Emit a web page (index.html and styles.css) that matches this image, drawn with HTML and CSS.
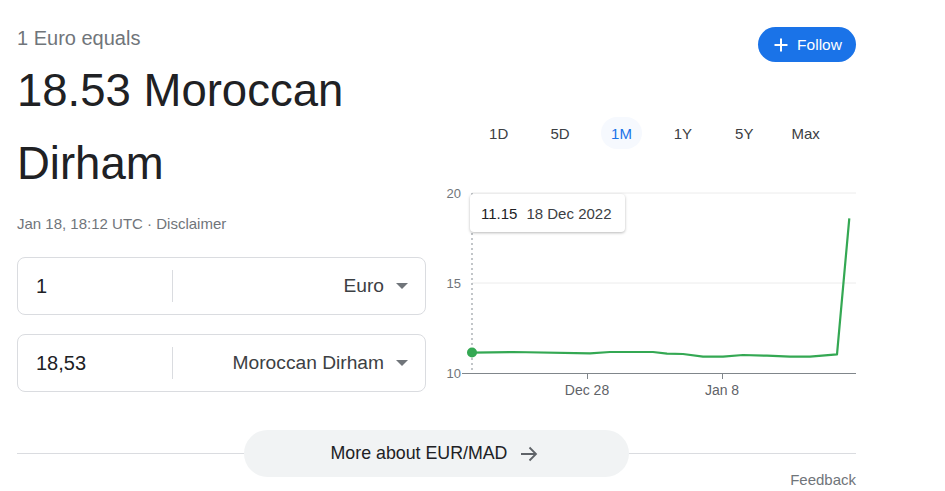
FILE: index.html
```html
<!DOCTYPE html>
<html lang="en">
<head>
<meta charset="utf-8">
<title>EUR to MAD</title>
<link rel="stylesheet" href="styles.css">
</head>
<body>
<div class="page">
  <div class="top">
    <div class="left">
      <div class="equals">1 Euro equals</div>
      <div class="rate">18.53 Moroccan Dirham</div>
      <div class="meta">Jan 18, 18:12 UTC · Disclaimer</div>
      <div class="boxes">
        <div class="box">
          <div class="amount">1</div>
          <div class="divider"></div>
          <div class="currency"><span>Euro</span><span class="caret"></span></div>
        </div>
        <div class="box">
          <div class="amount">18,53</div>
          <div class="divider"></div>
          <div class="currency"><span>Moroccan Dirham</span><span class="caret"></span></div>
        </div>
      </div>
    </div>
    <div class="right">
      <div class="follow-row">
        <button class="follow">
          <svg width="14" height="14" viewBox="0 0 14 14"><path d="M7 0.5V13.5M0.5 7H13.5" stroke="#fff" stroke-width="2" fill="none"/></svg>
          <span>Follow</span>
        </button>
      </div>
      <div class="tabs">
        <div class="tab">1D</div>
        <div class="tab">5D</div>
        <div class="tab active">1M</div>
        <div class="tab">1Y</div>
        <div class="tab">5Y</div>
        <div class="tab">Max</div>
      </div>
      <div class="chart">
        <svg width="416" height="220" viewBox="0 0 416 220">
          <line x1="32" y1="8" x2="416" y2="8" stroke="#ececec" stroke-width="1"/>
          <line x1="32" y1="98" x2="416" y2="98" stroke="#ececec" stroke-width="1"/>
          <line x1="22" y1="188.5" x2="416" y2="188.5" stroke="#80868b" stroke-width="1"/>
          <line x1="147.5" y1="188" x2="147.5" y2="194" stroke="#80868b" stroke-width="1"/>
          <line x1="282.5" y1="188" x2="282.5" y2="194" stroke="#80868b" stroke-width="1"/>
          <line x1="32" y1="8" x2="32" y2="188" stroke="#9aa0a6" stroke-width="1.2" stroke-dasharray="2 3"/>
          <text x="21" y="12.5" class="ylab" text-anchor="end">20</text>
          <text x="21" y="102.5" class="ylab" text-anchor="end">15</text>
          <text x="21" y="192.5" class="ylab" text-anchor="end">10</text>
          <text x="147" y="210" class="xlab" text-anchor="middle">Dec 28</text>
          <text x="282" y="210" class="xlab" text-anchor="middle">Jan 8</text>
          <polyline fill="none" stroke="#34a853" stroke-width="2.2" stroke-linejoin="round" points="32,167.7 73,167 150,168.3 170,167 213,167 227,168.7 243,169 263,171.7 283,171.7 303,170 327,170.7 350,171.7 370,171.7 397,169.3 409.3,33.3"/>
          <circle cx="32" cy="167.5" r="5" fill="#34a853"/>
        </svg>
        <div class="tooltip"><span class="tval">11.15</span><span class="tdate">18 Dec 2022</span></div>
      </div>
    </div>
  </div>
  <div class="more">
    <button class="more-btn">
      <span>More about EUR/MAD</span>
      <svg width="18" height="16" viewBox="0 0 18 16"><path d="M1 8H16M9.5 1.5L16 8L9.5 14.5" stroke="#5f6368" stroke-width="1.8" fill="none"/></svg>
    </button>
  </div>
  <div class="feedback">Feedback</div>
</div>
</body>
</html>
```

FILE: styles.css
```css
* { box-sizing: border-box; }
html, body { margin: 0; padding: 0; background: #fff; }
body { font-family: "Liberation Sans", Arial, sans-serif; color: #202124; }

.page { width: 839px; margin-left: 17px; }

.top { display: flex; justify-content: space-between; }
.left { width: 409px; padding-top: 26px; }
.right { width: 416px; }

.equals { font-size: 20px; line-height: 24px; color: #70757a; }
.rate { margin-top: 4px; font-size: 45.5px; line-height: 73px; color: #202124; width: 380px; }
.meta { margin-top: 14px; font-size: 15px; line-height: 20px; color: #70757a; }

.boxes { margin-top: 23px; display: flex; flex-direction: column; gap: 19px; }
.box {
  height: 58px; border: 1px solid #dadce0; border-radius: 8px;
  display: flex; align-items: center;
}
.amount { width: 154px; padding-left: 18px; font-size: 20px; color: #202124; }
.divider { width: 1px; height: 32px; background: #dadce0; }
.currency {
  flex: 1; display: flex; justify-content: flex-end; align-items: center;
  gap: 12px; padding-right: 17px; font-size: 19.2px; color: #3c4043;
}
.caret {
  width: 0; height: 0; border-left: 6px solid transparent; border-right: 6px solid transparent;
  border-top: 6px solid #70757a;
}

.follow-row { display: flex; justify-content: flex-end; margin-top: 27px; }
.follow {
  height: 35px; width: 98px; border: none; border-radius: 18px; background: #1a73e8;
  color: #fff; font-family: "Liberation Sans", Arial, sans-serif; font-size: 15.5px;
  display: flex; align-items: center; justify-content: center; gap: 9px; padding: 0 0 0 2px;
}

.tabs { margin-top: 55px; margin-left: 28px; display: grid; grid-template-columns: repeat(6, 61.4px); height: 32px; }
.tab { display: flex; align-items: center; justify-content: center; font-size: 15px; color: #3c4043; }
.tab.active { color: #1a73e8; background: #f6f9fe; border-radius: 16px; margin: 0 10px; }

.chart { position: relative; margin-top: 36px; height: 220px; }
.chart svg { display: block; }
.ylab { font-family: "Liberation Sans", Arial, sans-serif; font-size: 13px; fill: #70757a; }
.xlab { font-family: "Liberation Sans", Arial, sans-serif; font-size: 14px; fill: #5f6368; }
.tooltip {
  position: absolute; left: 30px; top: 9px; width: 155px; height: 38px;
  background: #fff; border-radius: 4px; box-shadow: 0 1px 3px rgba(0,0,0,0.28);
  display: flex; align-items: center; padding-left: 11px; gap: 9px; font-size: 15px;
}
.tval { color: #202124; }
.tdate { color: #3c4043; }

.more { margin-top: 25px; position: relative; display: flex; justify-content: center; height: 47px; }
.more::before {
  content: ""; position: absolute; left: 0; right: 0; top: 23px; height: 1px; background: #dadce0;
}
.more-btn {
  position: relative; width: 385px; height: 47px; border: none; border-radius: 24px;
  background: #f1f3f4; font-family: "Liberation Sans", Arial, sans-serif; font-size: 17.8px; color: #202124;
  display: flex; align-items: center; justify-content: center; gap: 13px; padding: 0 4px 0 0;
}

.feedback { margin-top: -6px; text-align: right; font-size: 15px; line-height: 18px; color: #70757a; }
```
